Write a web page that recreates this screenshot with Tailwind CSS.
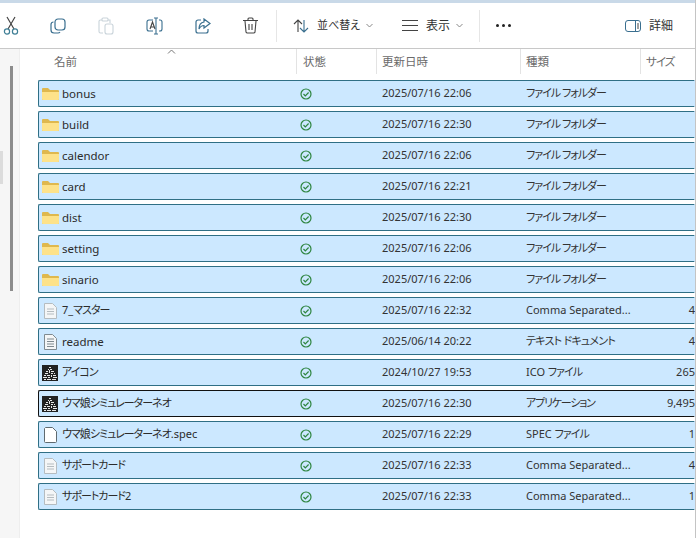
<!DOCTYPE html>
<html><head><meta charset="utf-8"><script src="https://cdn.jsdelivr.net/npm/@tailwindcss/browser@4"></script></head>
<body class="m-0 bg-white overflow-hidden font-['Noto_Sans','Noto_Sans_CJK_JP',sans-serif] [font-feature-settings:'palt'] text-[11px] text-[#2b2b2b]">
<div class="w-[696px] h-[538px] flex flex-col overflow-hidden border-r border-[#c4c4c4]">
  <div class="h-[3px] bg-[#c9d9e8] shrink-0"></div>
  <div class="h-[46px] flex items-center border-b border-[#c8c8c8] shrink-0 relative text-[#333]">
    <svg class="ml-[2px] w-[18px] h-[20px]" viewBox="0 0 18 20" fill="none" stroke="#3f7f96" stroke-width="1.2"><path d="M13 1 6 13M5 1l7 12" stroke="#444"/><circle cx="5" cy="15.5" r="2.6"/><circle cx="13" cy="15.5" r="2.6"/></svg>
    <svg class="ml-[30px] w-[16px] h-[16px]" viewBox="0 0 16 16" fill="none" stroke="#3a6f8f" stroke-width="1.2"><rect x="5" y="1" width="10" height="11" rx="3"/><path d="M3.500 4A2.500 2.500 0 0 0 1 6.500V12a3 3 0 0 0 3 3h4a2.500 2.500 0 0 0 2-1"/></svg>
    <svg class="ml-[32px] w-[16px] h-[18px]" viewBox="0 0 16 18" fill="none" stroke="#c9d3da" stroke-width="1.100"><path d="M4 3H2.500A1.500 1.500 0 0 0 1 4.500v10A1.500 1.500 0 0 0 2.500 16H5"/><path d="M10 3h2v3"/><rect x="4" y="1" width="6" height="3" rx="1"/><rect x="7" y="7" width="8" height="10" rx="2"/></svg>
    <svg class="ml-[32px] w-[17px] h-[18px]" viewBox="0 0 17 18" fill="none" stroke="#3a6f8f" stroke-width="1.100"><path d="M7 3H3a2 2 0 0 0-2 2v7a2 2 0 0 0 2 2h4M13 3h1a2 2 0 0 1 2 2v7a2 2 0 0 1-2 2h-1"/><path d="M8 1h2M10 1v16M8 17h4M10 1h2"/><path d="M4 12l2.500-7 2.500 7M5 10h3" stroke="#444"/></svg>
    <svg class="ml-[32px] w-[16px] h-[16px]" viewBox="0 0 16 16" fill="none" stroke="#3a6f8f" stroke-width="1.200"><path d="M6 2H3a2 2 0 0 0-2 2v9a2 2 0 0 0 2 2h8a2 2 0 0 0 2-2v-2"/><path d="M9 1l6 4.500L9 10V7.500C6.500 7.500 5 9 4 11c0-4 2-6.500 5-7z"/></svg>
    <svg class="ml-[32px] w-[15px] h-[17px]" viewBox="0 0 15 17" fill="none" stroke="#444" stroke-width="1.100"><path d="M0 3.500h15M5 3V2a1 1 0 0 1 1-1h3a1 1 0 0 1 1 1v1M2 4l1 11a1.500 1.500 0 0 0 1.500 1h6A1.500 1.500 0 0 0 12 15l1-11M6 7v6M9 7v6"/></svg>
    <div class="ml-[18px] w-px h-[32px] bg-[#e6e6e6]"></div>
    <svg class="ml-[16px] w-[16px] h-[14px]" viewBox="0 0 16 14" fill="none" stroke-width="1.100"><path d="M5 13V1M1 5l4-4 4 4" stroke="#444"/><path d="M11 1v12M7 9l4 4 4-4" stroke="#3a6f8f"/></svg>
    <span class="ml-[8px] w-[44px] whitespace-nowrap">並べ替え</span>
    <svg class="ml-[5px] w-[7px] h-[5px]" viewBox="0 0 7 5" fill="none" stroke="#888"><path d="M.5 1l3 3 3-3"/></svg>
    <svg class="ml-[29px] w-[16px] h-[11px]" viewBox="0 0 16 11" fill="none" stroke="#444"><path d="M0 .5h16M0 5.500h16M0 10.500h16"/></svg>
    <span class="ml-[8px] w-[24px] text-[12px]">表示</span>
    <svg class="ml-[6px] w-[7px] h-[5px]" viewBox="0 0 7 5" fill="none" stroke="#888"><path d="M.5 1l3 3 3-3"/></svg>
    <div class="ml-[16px] w-px h-[32px] bg-[#e6e6e6]"></div>
    <div class="ml-[16px] flex gap-[3px]"><span class="w-[3px] h-[3px] rounded-full bg-[#222]"></span><span class="w-[3px] h-[3px] rounded-full bg-[#222]"></span><span class="w-[3px] h-[3px] rounded-full bg-[#222]"></span></div>
    <svg class="ml-[114px] w-[16px] h-[12px]" viewBox="0 0 16 12" fill="none" stroke="#3a6f8f"><rect x=".5" y=".5" width="15" height="11" rx="2.500"/><path d="M10.500 .5v11" /><path d="M12 4h2M12 6h2M12 8h2" stroke="#444"/></svg>
    <span class="ml-[8px] text-[12px]">詳細</span>
  </div>
  <div class="flex flex-1 min-h-0">
    <div class="w-[20px] shrink-0 bg-[#f6f6f6] relative border-r border-[#eeeeee]">
      <div class="absolute left-[10px] top-[17px] w-[3px] h-[225px] bg-[#8c8c8c]"></div>
      <div class="absolute left-0 top-[102px] w-[3px] h-[33px] bg-[#dcdcdc]"></div>
    </div>
    <div class="flex-1 flex flex-col min-w-0 relative">
      <svg class="absolute left-[147px] top-0 w-[9px] h-[5px]" viewBox="0 0 9 5" fill="none" stroke="#777"><path d="M1 4.500 4.500 1 8 4.500"/></svg>
      <div class="h-[31px] flex items-start text-[#6b6b6b] text-[11.5px] shrink-0">
        <div class="w-[276px] h-[25px] pl-[34px] leading-[25px]">名前</div>
        <div class="w-[80px] h-[25px] pl-[6px] leading-[25px] border-l border-[#e3e3e3]">状態</div>
        <div class="w-[144px] h-[25px] pl-[5px] leading-[25px] border-l border-[#e3e3e3]">更新日時</div>
        <div class="w-[120px] h-[25px] pl-[5px] leading-[25px] border-l border-[#e3e3e3]">種類</div>
        <div class="flex-1 h-[25px] pl-[5px] leading-[25px] border-l border-[#e3e3e3] tracking-[-1px]">サイズ</div>
      </div>
      <div class="ml-[18px] flex flex-col gap-[4px]">
        <div class="h-[27px] flex items-center bg-[#cce8ff] border border-[#2f6f85] rounded-l-[2px] border-r-[#cce8ff]">
          <svg class="ml-[3px] w-[17px] h-[14px] shrink-0" viewBox="0 0 17 14"><path d="M0 2a1 1 0 0 1 1-1h5l2 2h8a1 1 0 0 1 1 1v8a1 1 0 0 1-1 1H1a1 1 0 0 1-1-1z" fill="#dfb84e"/><path d="M0 5h17v7a1 1 0 0 1-1 1H1a1 1 0 0 1-1-1z" fill="#fde28a"/></svg>
          <span class="ml-[3px] w-[238px] shrink-0 text-[11.5px]">bonus</span>
          <svg class="w-[12px] h-[12px] shrink-0" viewBox="0 0 12 12" fill="none" stroke="#2e8540" stroke-width="1.200"><circle cx="6" cy="6" r="5"/><path d="M3.500 6 5.300 7.800 8.600 4.500"/></svg>
          <span class="ml-[70px] w-[144px] shrink-0 text-[#333]">2025/07/16 22:06</span>
          <span class="w-[110px] shrink-0 text-[#333] whitespace-nowrap tracking-[-1px]">ファイル フォルダー</span>
        </div>
        <div class="h-[27px] flex items-center bg-[#cce8ff] border border-[#2f6f85] rounded-l-[2px] border-r-[#cce8ff]">
          <svg class="ml-[3px] w-[17px] h-[14px] shrink-0" viewBox="0 0 17 14"><path d="M0 2a1 1 0 0 1 1-1h5l2 2h8a1 1 0 0 1 1 1v8a1 1 0 0 1-1 1H1a1 1 0 0 1-1-1z" fill="#dfb84e"/><path d="M0 5h17v7a1 1 0 0 1-1 1H1a1 1 0 0 1-1-1z" fill="#fde28a"/></svg>
          <span class="ml-[3px] w-[238px] shrink-0 text-[11.5px]">build</span>
          <svg class="w-[12px] h-[12px] shrink-0" viewBox="0 0 12 12" fill="none" stroke="#2e8540" stroke-width="1.200"><circle cx="6" cy="6" r="5"/><path d="M3.500 6 5.300 7.800 8.600 4.500"/></svg>
          <span class="ml-[70px] w-[144px] shrink-0 text-[#333]">2025/07/16 22:30</span>
          <span class="w-[110px] shrink-0 text-[#333] whitespace-nowrap tracking-[-1px]">ファイル フォルダー</span>
        </div>
        <div class="h-[27px] flex items-center bg-[#cce8ff] border border-[#2f6f85] rounded-l-[2px] border-r-[#cce8ff]">
          <svg class="ml-[3px] w-[17px] h-[14px] shrink-0" viewBox="0 0 17 14"><path d="M0 2a1 1 0 0 1 1-1h5l2 2h8a1 1 0 0 1 1 1v8a1 1 0 0 1-1 1H1a1 1 0 0 1-1-1z" fill="#dfb84e"/><path d="M0 5h17v7a1 1 0 0 1-1 1H1a1 1 0 0 1-1-1z" fill="#fde28a"/></svg>
          <span class="ml-[3px] w-[238px] shrink-0 text-[11.5px]">calendor</span>
          <svg class="w-[12px] h-[12px] shrink-0" viewBox="0 0 12 12" fill="none" stroke="#2e8540" stroke-width="1.200"><circle cx="6" cy="6" r="5"/><path d="M3.500 6 5.300 7.800 8.600 4.500"/></svg>
          <span class="ml-[70px] w-[144px] shrink-0 text-[#333]">2025/07/16 22:06</span>
          <span class="w-[110px] shrink-0 text-[#333] whitespace-nowrap tracking-[-1px]">ファイル フォルダー</span>
        </div>
        <div class="h-[27px] flex items-center bg-[#cce8ff] border border-[#2f6f85] rounded-l-[2px] border-r-[#cce8ff]">
          <svg class="ml-[3px] w-[17px] h-[14px] shrink-0" viewBox="0 0 17 14"><path d="M0 2a1 1 0 0 1 1-1h5l2 2h8a1 1 0 0 1 1 1v8a1 1 0 0 1-1 1H1a1 1 0 0 1-1-1z" fill="#dfb84e"/><path d="M0 5h17v7a1 1 0 0 1-1 1H1a1 1 0 0 1-1-1z" fill="#fde28a"/></svg>
          <span class="ml-[3px] w-[238px] shrink-0 text-[11.5px]">card</span>
          <svg class="w-[12px] h-[12px] shrink-0" viewBox="0 0 12 12" fill="none" stroke="#2e8540" stroke-width="1.200"><circle cx="6" cy="6" r="5"/><path d="M3.500 6 5.300 7.800 8.600 4.500"/></svg>
          <span class="ml-[70px] w-[144px] shrink-0 text-[#333]">2025/07/16 22:21</span>
          <span class="w-[110px] shrink-0 text-[#333] whitespace-nowrap tracking-[-1px]">ファイル フォルダー</span>
        </div>
        <div class="h-[27px] flex items-center bg-[#cce8ff] border border-[#2f6f85] rounded-l-[2px] border-r-[#cce8ff]">
          <svg class="ml-[3px] w-[17px] h-[14px] shrink-0" viewBox="0 0 17 14"><path d="M0 2a1 1 0 0 1 1-1h5l2 2h8a1 1 0 0 1 1 1v8a1 1 0 0 1-1 1H1a1 1 0 0 1-1-1z" fill="#dfb84e"/><path d="M0 5h17v7a1 1 0 0 1-1 1H1a1 1 0 0 1-1-1z" fill="#fde28a"/></svg>
          <span class="ml-[3px] w-[238px] shrink-0 text-[11.5px]">dist</span>
          <svg class="w-[12px] h-[12px] shrink-0" viewBox="0 0 12 12" fill="none" stroke="#2e8540" stroke-width="1.200"><circle cx="6" cy="6" r="5"/><path d="M3.500 6 5.300 7.800 8.600 4.500"/></svg>
          <span class="ml-[70px] w-[144px] shrink-0 text-[#333]">2025/07/16 22:30</span>
          <span class="w-[110px] shrink-0 text-[#333] whitespace-nowrap tracking-[-1px]">ファイル フォルダー</span>
        </div>
        <div class="h-[27px] flex items-center bg-[#cce8ff] border border-[#2f6f85] rounded-l-[2px] border-r-[#cce8ff]">
          <svg class="ml-[3px] w-[17px] h-[14px] shrink-0" viewBox="0 0 17 14"><path d="M0 2a1 1 0 0 1 1-1h5l2 2h8a1 1 0 0 1 1 1v8a1 1 0 0 1-1 1H1a1 1 0 0 1-1-1z" fill="#dfb84e"/><path d="M0 5h17v7a1 1 0 0 1-1 1H1a1 1 0 0 1-1-1z" fill="#fde28a"/></svg>
          <span class="ml-[3px] w-[238px] shrink-0 text-[11.5px]">setting</span>
          <svg class="w-[12px] h-[12px] shrink-0" viewBox="0 0 12 12" fill="none" stroke="#2e8540" stroke-width="1.200"><circle cx="6" cy="6" r="5"/><path d="M3.500 6 5.300 7.800 8.600 4.500"/></svg>
          <span class="ml-[70px] w-[144px] shrink-0 text-[#333]">2025/07/16 22:06</span>
          <span class="w-[110px] shrink-0 text-[#333] whitespace-nowrap tracking-[-1px]">ファイル フォルダー</span>
        </div>
        <div class="h-[27px] flex items-center bg-[#cce8ff] border border-[#2f6f85] rounded-l-[2px] border-r-[#cce8ff]">
          <svg class="ml-[3px] w-[17px] h-[14px] shrink-0" viewBox="0 0 17 14"><path d="M0 2a1 1 0 0 1 1-1h5l2 2h8a1 1 0 0 1 1 1v8a1 1 0 0 1-1 1H1a1 1 0 0 1-1-1z" fill="#dfb84e"/><path d="M0 5h17v7a1 1 0 0 1-1 1H1a1 1 0 0 1-1-1z" fill="#fde28a"/></svg>
          <span class="ml-[3px] w-[238px] shrink-0 text-[11.5px]">sinario</span>
          <svg class="w-[12px] h-[12px] shrink-0" viewBox="0 0 12 12" fill="none" stroke="#2e8540" stroke-width="1.200"><circle cx="6" cy="6" r="5"/><path d="M3.500 6 5.300 7.800 8.600 4.500"/></svg>
          <span class="ml-[70px] w-[144px] shrink-0 text-[#333]">2025/07/16 22:06</span>
          <span class="w-[110px] shrink-0 text-[#333] whitespace-nowrap tracking-[-1px]">ファイル フォルダー</span>
        </div>
        <div class="h-[27px] flex items-center bg-[#cce8ff] border border-[#2f6f85] rounded-l-[2px] border-r-[#cce8ff]">
          <svg class="ml-[5px] mr-[2px] w-[13px] h-[16px] shrink-0" viewBox="0 0 13 16" fill="#f4f6f7" stroke="#b5bcc0"><path d="M.5.5h8l4 4v11H.5z"/><path d="M3 6h7M3 8.500h7M3 11h7" fill="none"/></svg>
          <span class="ml-[3px] w-[238px] shrink-0 text-[11px]">7_<span class="tracking-[-1px]">マスター</span></span>
          <svg class="w-[12px] h-[12px] shrink-0" viewBox="0 0 12 12" fill="none" stroke="#2e8540" stroke-width="1.200"><circle cx="6" cy="6" r="5"/><path d="M3.500 6 5.300 7.800 8.600 4.500"/></svg>
          <span class="ml-[70px] w-[144px] shrink-0 text-[#333]">2025/07/16 22:32</span>
          <span class="w-[110px] shrink-0 text-[#333] whitespace-nowrap">Comma Separated...</span>
          <span class="w-[59px] shrink-0 text-right text-[#333]">4</span>
        </div>
        <div class="h-[27px] flex items-center bg-[#cce8ff] border border-[#2f6f85] rounded-l-[2px] border-r-[#cce8ff]">
          <svg class="ml-[5px] mr-[2px] w-[13px] h-[16px] shrink-0" viewBox="0 0 13 16" fill="#f4f6f7" stroke="#7f8a90"><path d="M.5.500h8l4 4v11H.5z"/><path d="M3 5h7M3 7.500h7M3 10h7M3 12.500h7" fill="none"/></svg>
          <span class="ml-[3px] w-[238px] shrink-0 text-[11.5px]">readme</span>
          <svg class="w-[12px] h-[12px] shrink-0" viewBox="0 0 12 12" fill="none" stroke="#2e8540" stroke-width="1.200"><circle cx="6" cy="6" r="5"/><path d="M3.500 6 5.300 7.800 8.600 4.500"/></svg>
          <span class="ml-[70px] w-[144px] shrink-0 text-[#333]">2025/06/14 20:22</span>
          <span class="w-[110px] shrink-0 text-[#333] whitespace-nowrap tracking-[-.75px]">テキスト ドキュメント</span>
          <span class="w-[59px] shrink-0 text-right text-[#333]">4</span>
        </div>
        <div class="h-[27px] flex items-center bg-[#cce8ff] border border-[#2f6f85] rounded-l-[2px] border-r-[#cce8ff]">
          <svg class="ml-[3px] mr-[1px] w-[16px] h-[16px] shrink-0" viewBox="0 0 16 16"><rect width="16" height="16" fill="#222"/><path d="M7 2h2v1H7zM6 4h1v1H6zM8 4h2v1H8zM4 6h2v1H4zM7 5h1v3H7zM9 6h3v1H9zM3 8h3v1H3zM9 8h2v1H9zM12 8h1v1h-1zM2 10h2v1H2zM5 10h3v1H5zM9 10h1v2H9zM11 10h3v1h-3zM1 12h4v1H1zM6 12h2v1H6zM11 12h4v1h-4zM2 14h2v1H2zM5 14h4v1H5zM10 14h4v1h-4z" fill="#e8e8e8"/></svg>
          <span class="ml-[3px] w-[238px] shrink-0 text-[11px] tracking-[-1px]">アイコン</span>
          <svg class="w-[12px] h-[12px] shrink-0" viewBox="0 0 12 12" fill="none" stroke="#2e8540" stroke-width="1.200"><circle cx="6" cy="6" r="5"/><path d="M3.500 6 5.300 7.800 8.600 4.500"/></svg>
          <span class="ml-[70px] w-[144px] shrink-0 text-[#333]">2024/10/27 19:53</span>
          <span class="w-[110px] shrink-0 text-[#333] whitespace-nowrap">ICO <span class="tracking-[-1px]">ファイル</span></span>
          <span class="w-[59px] shrink-0 text-right text-[#333]">265</span>
        </div>
        <div class="h-[27px] flex items-center bg-[#cce8ff] border border-[#111] rounded-l-[2px] border-r-[#cce8ff]">
          <svg class="ml-[3px] mr-[1px] w-[16px] h-[16px] shrink-0" viewBox="0 0 16 16"><rect width="16" height="16" fill="#222"/><path d="M7 2h2v1H7zM6 4h1v1H6zM8 4h2v1H8zM4 6h2v1H4zM7 5h1v3H7zM9 6h3v1H9zM3 8h3v1H3zM9 8h2v1H9zM12 8h1v1h-1zM2 10h2v1H2zM5 10h3v1H5zM9 10h1v2H9zM11 10h3v1h-3zM1 12h4v1H1zM6 12h2v1H6zM11 12h4v1h-4zM2 14h2v1H2zM5 14h4v1H5zM10 14h4v1h-4z" fill="#e8e8e8"/></svg>
          <span class="ml-[3px] w-[238px] shrink-0 text-[11px] tracking-[-1px]">ウマ娘シミュレーターネオ</span>
          <svg class="w-[12px] h-[12px] shrink-0" viewBox="0 0 12 12" fill="none" stroke="#2e8540" stroke-width="1.200"><circle cx="6" cy="6" r="5"/><path d="M3.500 6 5.300 7.800 8.600 4.500"/></svg>
          <span class="ml-[70px] w-[144px] shrink-0 text-[#333]">2025/07/16 22:30</span>
          <span class="w-[110px] shrink-0 text-[#333] whitespace-nowrap tracking-[-1.200px]">アプリケーション</span>
          <span class="w-[59px] shrink-0 text-right text-[#333]">9,495</span>
        </div>
        <div class="h-[27px] flex items-center bg-[#cce8ff] border border-[#2f6f85] rounded-l-[2px] border-r-[#cce8ff]">
          <svg class="ml-[5px] mr-[2px] w-[13px] h-[16px] shrink-0" viewBox="0 0 13 16" fill="#fff" stroke="#5f6a70"><path d="M1.500.5h7l4 4v10a1 1 0 0 1-1 1h-10a1 1 0 0 1-1-1V1.500z"/></svg>
          <span class="ml-[3px] w-[238px] shrink-0 text-[11px]"><span class="tracking-[-1px]">ウマ娘シミュレーターネオ</span>.spec</span>
          <svg class="w-[12px] h-[12px] shrink-0" viewBox="0 0 12 12" fill="none" stroke="#2e8540" stroke-width="1.200"><circle cx="6" cy="6" r="5"/><path d="M3.500 6 5.300 7.800 8.600 4.500"/></svg>
          <span class="ml-[70px] w-[144px] shrink-0 text-[#333]">2025/07/16 22:29</span>
          <span class="w-[110px] shrink-0 text-[#333] whitespace-nowrap">SPEC <span class="tracking-[-1px]">ファイル</span></span>
          <span class="w-[59px] shrink-0 text-right text-[#333]">1</span>
        </div>
        <div class="h-[27px] flex items-center bg-[#cce8ff] border border-[#2f6f85] rounded-l-[2px] border-r-[#cce8ff]">
          <svg class="ml-[5px] mr-[2px] w-[13px] h-[16px] shrink-0" viewBox="0 0 13 16" fill="#f4f6f7" stroke="#b5bcc0"><path d="M.5.5h8l4 4v11H.5z"/><path d="M3 6h7M3 8.500h7M3 11h7" fill="none"/></svg>
          <span class="ml-[3px] w-[238px] shrink-0 text-[11px] tracking-[-1px]">サポートカード</span>
          <svg class="w-[12px] h-[12px] shrink-0" viewBox="0 0 12 12" fill="none" stroke="#2e8540" stroke-width="1.200"><circle cx="6" cy="6" r="5"/><path d="M3.500 6 5.300 7.800 8.600 4.500"/></svg>
          <span class="ml-[70px] w-[144px] shrink-0 text-[#333]">2025/07/16 22:33</span>
          <span class="w-[110px] shrink-0 text-[#333] whitespace-nowrap">Comma Separated...</span>
          <span class="w-[59px] shrink-0 text-right text-[#333]">4</span>
        </div>
        <div class="h-[27px] flex items-center bg-[#cce8ff] border border-[#2f6f85] rounded-l-[2px] border-r-[#cce8ff]">
          <svg class="ml-[5px] mr-[2px] w-[13px] h-[16px] shrink-0" viewBox="0 0 13 16" fill="#f4f6f7" stroke="#b5bcc0"><path d="M.5.5h8l4 4v11H.5z"/><path d="M3 6h7M3 8.500h7M3 11h7" fill="none"/></svg>
          <span class="ml-[3px] w-[238px] shrink-0 text-[11px]"><span class="tracking-[-1px]">サポートカード</span>2</span>
          <svg class="w-[12px] h-[12px] shrink-0" viewBox="0 0 12 12" fill="none" stroke="#2e8540" stroke-width="1.200"><circle cx="6" cy="6" r="5"/><path d="M3.500 6 5.300 7.800 8.600 4.500"/></svg>
          <span class="ml-[70px] w-[144px] shrink-0 text-[#333]">2025/07/16 22:33</span>
          <span class="w-[110px] shrink-0 text-[#333] whitespace-nowrap">Comma Separated...</span>
          <span class="w-[59px] shrink-0 text-right text-[#333]">1</span>
        </div>
      </div>
    </div>
  </div>
</div>
</body></html>
